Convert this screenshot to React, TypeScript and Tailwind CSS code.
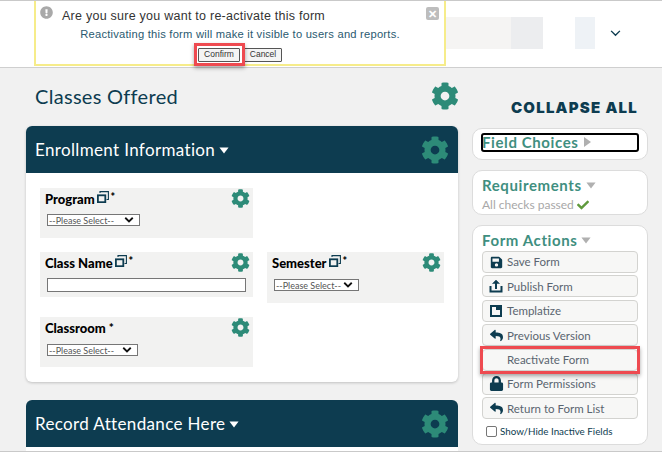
import { FaCog, FaCheck, FaExclamationCircle, FaLock, FaReply, FaSave } from "react-icons/fa";
import type { ReactNode } from "react";

const Caret = ({ className }: { className: string }) => (
  <svg viewBox="0 0 12 8" className={className} fill="currentColor">
    <path d="M0.5 0.5h11L6 7.5z" />
  </svg>
);

const PopupIcon = () => (
  <svg viewBox="0 0 12 12" className="mx-[2px] mt-[-5px] size-[12px] text-[#0d3c50]" fill="none" stroke="currentColor">
    <rect x="0.9" y="4.3" width="7.4" height="6.9" strokeWidth="1.8" />
    <path d="M3 2V0.6h8.4V8.5H9.5" strokeWidth="1.1" />
  </svg>
);

const Select = ({ className }: { className: string }) => (
  <div className={`ml-[2px] flex h-[12px] items-center justify-between border border-[#767676] bg-white pr-[5px] pl-[1px] ${className}`}>
    <span className="text-[9px] leading-none text-[#555]">--Please Select--</span>
    <svg viewBox="0 0 12 8" className="h-[6px] w-[10px]" fill="none" stroke="#111" strokeWidth="2.4">
      <path d="M1 1l5 5 5-5" />
    </svg>
  </div>
);

function Field({ label, popup, className, children }: { label: string; popup?: boolean; className: string; children: ReactNode }) {
  return (
    <div className={`bg-[#f2f2f1] pl-[5px] ${className}`}>
      <div className="flex h-[21px] items-center justify-between pr-[3px]">
        <div className="mt-[2px] flex items-center text-[13px] font-black text-black">
          <span>{label}</span>
          {popup ? <PopupIcon /> : <span className="w-[3px]" />}
          <span className={popup ? "mt-[-4px] text-[11px]" : "mt-[-2px] text-[12px]"}>*</span>
        </div>
        <FaCog className="size-[19px] text-[#2d8b78]" />
      </div>
      {children}
    </div>
  );
}

function ActionButton({ icon, label }: { icon?: ReactNode; label: string }) {
  return (
    <div className="flex h-[22px] items-center rounded-[4px] border border-[#d3d3d0] bg-[#f7f7f6]">
      <span className="flex w-[24px] justify-center pl-[2px] text-[#0d3c50]">{icon}</span>
      <span className="text-[11.5px] text-[#5a6570]">{label}</span>
    </div>
  );
}

function PanelHeader({ title }: { title: string }) {
  return (
    <div className="flex h-[47px] items-center justify-between rounded-t-[6px] bg-[#0d3c50] pr-[9px] pl-[9px]">
      <div className="flex items-center gap-[4px] text-[17px] tracking-[0.35px] text-white">
        {title}
        <Caret className="mt-[2px] h-[7px] w-[10px] text-white" />
      </div>
      <FaCog className="size-[28px] text-[#2d8b78]" />
    </div>
  );
}

export default function App() {
  return (
    <div className="relative flex h-[452px] w-[662px] flex-col overflow-hidden border-t border-b border-[#c9c9c9] bg-[#f1f1f1] font-['Lato',sans-serif]">
      {/* Top bar */}
      <div className="flex h-[67px] shrink-0 items-center border-b border-[#cfcfcf] bg-white pb-[3px] pl-[446px]">
        <div className="h-[32px] w-[65px] bg-[#f5f4f3]" />
        <div className="h-[32px] w-[32px] bg-[#ecedef]" />
        <div className="ml-[32px] h-[32px] w-[20px] bg-[#eef2f6]" />
        <svg viewBox="0 0 12 8" className="mt-[2px] ml-[15px] h-[7px] w-[11px]" fill="none" stroke="#0d3c50" strokeWidth="1.6">
          <path d="M1 1l5 5 5-5" />
        </svg>
      </div>

      {/* Main */}
      <div className="flex min-h-0 flex-1 pl-[26px]">
        <div className="w-[432px] shrink-0">
          <div className="flex h-[58px] items-center justify-between pr-0 pb-[2px] pl-[9px]">
            <h1 className="text-[20px] tracking-[0.3px] text-[#0d3c50]">Classes Offered</h1>
            <FaCog className="mr-[-1px] size-[28px] text-[#2d8b78]" />
          </div>

          <div className="rounded-[6px] bg-white shadow-[0_1px_3px_rgba(0,0,0,0.2)]">
            <PanelHeader title="Enrollment Information" />
            <div className="grid h-[209px] grid-cols-[213px_177px] content-start gap-x-[14px] pt-[15px] pl-[14px]">
              <Field label="Program" popup className="col-span-2 h-[50px] w-[213px]">
                <Select className="mt-[5px] w-[93px]" />
              </Field>
              <div className="col-span-2 h-[14px]" />
              <Field label="Class Name" popup className="h-[45px]">
                <div className="mt-[5px] ml-[2px] h-[14px] w-[199px] border border-[#767676] bg-white" />
              </Field>
              <Field label="Semester" popup className="h-[51px]">
                <Select className="mt-[6px] w-[85px]" />
              </Field>
              <Field label="Classroom" className="mt-[14px] h-[50px]">
                <Select className="mt-[6px] w-[91px]" />
              </Field>
            </div>
          </div>

          <div className="mt-[18px]">
            <PanelHeader title="Record Attendance Here" />
            <div className="h-[10px] bg-white" />
          </div>
        </div>

        {/* Sidebar */}
        <aside className="ml-[14px] w-[176px] shrink-0">
          <div className="flex h-[60px] items-end justify-end pr-[10px] pb-[9px]">
            <span className="font-['Inter',sans-serif] text-[15px] font-black tracking-[1.2px] text-[#0d3c50]">COLLAPSE ALL</span>
          </div>

          <div className="flex h-[32px] items-center rounded-[10px] border border-[#dcdcdc] bg-white pb-[4px] pl-[8px]">
            <div className="flex h-[19px] w-[158px] items-center gap-[5px] rounded-[3px] border-2 border-black text-[15px] font-bold tracking-[0.6px] text-[#3f8f80]">
              <span className="ml-[-1px]">Field Choices</span>
              <svg viewBox="0 0 7 10" className="h-[10px] w-[7px] text-[#b0b0b0]" fill="currentColor">
                <path d="M0 0l7 5-7 5z" />
              </svg>
            </div>
          </div>

          <div className="mt-[10px] h-[45px] rounded-[10px] border border-[#dcdcdc] bg-white pt-[5px] pl-[9px]">
            <div className="flex h-[18px] items-center gap-[4px] text-[15px] font-bold tracking-[0.6px] text-[#3f8f80]">
              Requirements
              <Caret className="h-[7px] w-[10px] text-[#b0b0b0]" />
            </div>
            <div className="mt-[2px] flex items-center gap-[3px] text-[12px] leading-[18px] text-[#a8a8a8]">
              All checks passed
              <FaCheck className="size-[12px] text-[#5f9a3c]" />
            </div>
          </div>

          <div className="mt-[10px] h-[220px] rounded-[10px] border border-[#dcdcdc] bg-white pt-[5px] pr-[9px] pl-[9px]">
            <div className="mb-[2px] flex h-[18px] items-center gap-[4px] text-[15px] font-bold tracking-[0.6px] text-[#3f8f80]">
              Form Actions
              <Caret className="h-[7px] w-[10px] text-[#b0b0b0]" />
            </div>
            <div className="flex flex-col gap-[2.4px]">
              <ActionButton label="Save Form" icon={<FaSave className="size-[13px]" />} />
              <ActionButton
                label="Publish Form"
                icon={
                  <svg viewBox="0 0 14 14" className="size-[14px]" fill="none" stroke="currentColor" strokeWidth="2">
                    <path d="M1.5 7v5.5h11V7" />
                    <path d="M7 10V2" />
                    <path d="M3.5 4.5L7 1l3.5 3.5z" fill="currentColor" strokeWidth="0.5" />
                  </svg>
                }
              />
              <ActionButton
                label="Templatize"
                icon={
                  <svg viewBox="0 0 14 14" className="size-[14px]" fill="currentColor">
                    <path fillRule="evenodd" d="M1 1h12v12H1zM3 3v8h8V6H7V3z" />
                  </svg>
                }
              />
              <ActionButton label="Previous Version" icon={<FaReply className="size-[13px]" />} />
              <ActionButton label="Reactivate Form" />
              <ActionButton label="Form Permissions" icon={<FaLock className="size-[15px]" />} />
              <ActionButton label="Return to Form List" icon={<FaReply className="size-[13px]" />} />
            </div>
            <label className="mt-[5px] ml-[4px] flex h-[14px] items-center gap-[3px] text-[9.8px] text-[#0d3c50]">
              <span className="size-[11px] rounded-[2px] border border-[#767676] bg-white" />
              Show/Hide Inactive Fields
            </label>
          </div>
        </aside>
      </div>

      {/* Confirm alert */}
      <div className="absolute top-[-1px] left-[34px] flex h-[66px] w-[412px] flex-col items-center border-x-2 border-b-2 border-[#f6ec8a] bg-white">
        <FaExclamationCircle className="absolute top-[6px] left-[4px] size-[13px] text-[#a9a9a9]" />
        <span className="absolute top-[7px] left-[26px] font-['Liberation_Sans',sans-serif] text-[12.5px] tracking-[0.25px] text-[#333]">
          Are you sure you want to re-activate this form
        </span>
        <span className="absolute top-[7px] right-[5px] flex size-[13px] items-center justify-center rounded-[2px] bg-[#bdbdbd] text-[11px] leading-none font-bold text-white">
          ✕
        </span>
        <span className="mt-[26px] font-['Liberation_Sans',sans-serif] text-[11.2px] tracking-[0.22px] text-[#2a5a70]">
          Reactivating this form will make it visible to users and reports.
        </span>
        <div className="mt-[5px] flex gap-[4px] font-['Liberation_Sans',sans-serif] text-[8.5px] text-[#333]">
          <span className="flex h-[14px] w-[42px] items-center justify-center rounded-[1px] border border-[#555] bg-[#f4f4f4]">Confirm</span>
          <span className="flex h-[14px] w-[38px] items-center justify-center rounded-[1px] border border-[#555] bg-[#f4f4f4]">Cancel</span>
        </div>
      </div>

      {/* Red callouts */}
      <div className="absolute top-[42px] left-[194px] h-[23px] w-[51px] border-[3px] border-[#ee4a50] shadow-[0_2px_4px_rgba(0,0,0,0.35)]" />
      <div className="absolute top-[345px] left-[480px] h-[28px] w-[160px] border-[3px] border-[#ee4a50] shadow-[0_2px_4px_rgba(0,0,0,0.35)]" />
    </div>
  );
}
